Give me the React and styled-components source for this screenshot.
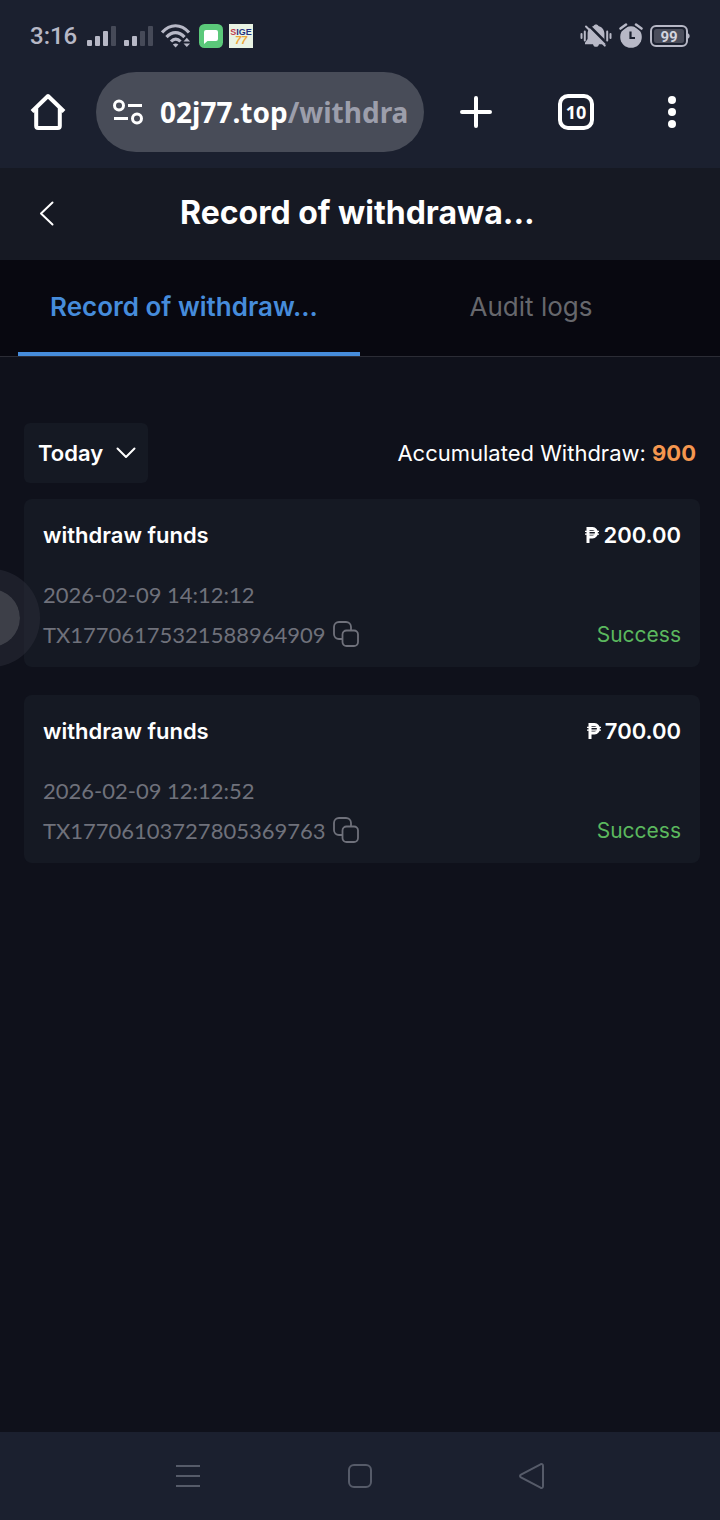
import { useState } from "react";
import styled, { createGlobalStyle } from "styled-components";

const GlobalStyle = createGlobalStyle`
  :root {
    --chrome: #1b202f;
    --header: #161923;
    --tabs: #080810;
    --page: #0f111b;
    --card: #151923;
    --muted: #6f717b;
    --accent: #468cdb;
    --status: #b7b8c6;
  }

  * {
    box-sizing: border-box;
  }

  body {
    margin: 0;
    background: var(--page);
    color: white;
    font-family: Inter, "Liberation Sans", sans-serif;
  }

  button,
  select {
    font: inherit;
    color: inherit;
    border: none;
    background: none;
    padding: 0;
    cursor: pointer;
  }

  svg {
    display: block;
    flex: none;
  }
`;

const Screen = styled.div`
  display: flex;
  flex-direction: column;
  min-height: 100vh;
`;

const StatusBar = styled.div`
  display: flex;
  justify-content: space-between;
  align-items: center;
  height: 72px;
  padding: 0 30px;
  background: var(--chrome);
  color: var(--status);
`;

const StatusGroup = styled.div`
  display: flex;
  align-items: center;
  gap: ${({ $gap }) => $gap}px;
`;

const Clock = styled.time`
  width: 49px;
  font: 500 24px/28px Roboto, sans-serif;
`;

const BrowserBar = styled.div`
  display: flex;
  align-items: center;
  height: 96px;
  padding-bottom: 16px;
  background: var(--chrome);
`;

const BrowserButton = styled.button`
  display: flex;
  justify-content: center;
  align-items: center;
  flex: 0 0 ${({ $width }) => $width}px;
  height: 80px;
`;

const AddressBar = styled.button`
  display: flex;
  align-items: center;
  gap: 16px;
  flex: 1;
  min-width: 0;
  height: 80px;
  padding: 0 8px 0 16px;
  border-radius: 40px;
  background: #484c58;
  font: 700 28px/40px "Noto Sans", sans-serif;
`;

const Url = styled.span`
  white-space: nowrap;

  span {
    color: #9c9eab;
  }
`;

const Header = styled.header`
  display: grid;
  grid-template-columns: 1fr 2fr 1fr;
  align-items: center;
  height: 92px;
  padding-bottom: 2px;
  background: var(--header);

  h1 {
    margin: 0;
    font-size: 32px;
    line-height: 40px;
    font-weight: 700;
    white-space: nowrap;
  }
`;

const BackButton = styled.button`
  justify-self: start;
  padding: 8px 32px;
`;

const Tabs = styled.div`
  display: flex;
  height: 97px;
  padding: 0 18px;
  background: var(--tabs);
  border-bottom: 1px solid #2b2c35;
`;

const Tab = styled.button`
  flex: 1;
  min-width: 0;
  padding: 2px 32px 0;
  font-size: 26px;
  line-height: 32px;
  text-align: ${({ $active }) => ($active ? "left" : "center")};
  white-space: nowrap;
  font-weight: ${({ $active }) => ($active ? 600 : 400)};
  color: ${({ $active }) => ($active ? "var(--accent)" : "#66676c")};
  border-bottom: 4px solid
    ${({ $active }) => ($active ? "var(--accent)" : "transparent")};
`;

const Content = styled.main`
  position: relative;
  flex: 1;
  overflow: hidden;
  padding: 66px 20px 0 24px;
`;

const FilterRow = styled.div`
  display: flex;
  justify-content: space-between;
  align-items: center;
  padding-right: 4px;
  margin-bottom: 16px;
`;

const DateFilter = styled.label`
  display: flex;
  align-items: center;
  width: 124px;
  height: 60px;
  padding: 0 12px 0 14px;
  border-radius: 6px;
  background: var(--card);

  select {
    flex: 1;
    min-width: 0;
    appearance: none;
    outline: none;
    font-size: 22px;
    line-height: 32px;
    font-weight: 600;
  }

  option {
    color: black;
  }
`;

const Total = styled.p`
  margin: 0;
  font-size: 22px;
  line-height: 32px;

  strong {
    font-weight: 700;
    color: #f5974f;
  }
`;

const RecordList = styled.ul`
  display: flex;
  flex-direction: column;
  gap: 28px;
  margin: 0;
  padding: 0;
  list-style: none;
`;

const Record = styled.li`
  height: 168px;
  padding: 20px 19px 0;
  border-radius: 8px;
  background: var(--card);
`;

const RecordRow = styled.div`
  display: flex;
  justify-content: space-between;
  align-items: center;
  height: 40px;
  font-size: 22px;
`;

const RecordTitle = styled(RecordRow)`
  height: 32px;
  margin-bottom: 23px;
  font-weight: 600;
`;

const Amount = styled.span`
  display: flex;
  align-items: center;
  gap: 4px;
`;

const Meta = styled.span`
  display: flex;
  align-items: center;
  gap: 8px;
  font-family: Lato, sans-serif;
  color: var(--muted);
`;

const Result = styled.span`
  font-size: 21px;
  color: #5bb85e;
`;

const FloatingButton = styled.button`
  position: absolute;
  left: -58px;
  top: 212px;
  width: 98px;
  height: 98px;
  border: 20px solid rgba(44, 46, 58, 0.5);
  border-radius: 50%;
  background: #3d3f48;
  background-clip: padding-box;
`;

const SystemNav = styled.nav`
  display: flex;
  justify-content: center;
  gap: 84px;
  height: 88px;
  background: var(--chrome);

  button {
    display: flex;
    justify-content: center;
    align-items: center;
    width: 88px;
    color: #565b69;
  }
`;

const records = [
  {
    id: "TX17706175321588964909",
    title: "withdraw funds",
    amount: "200.00",
    date: "2026-02-09 14:12:12",
    status: "Success",
  },
  {
    id: "TX17706103727805369763",
    title: "withdraw funds",
    amount: "700.00",
    date: "2026-02-09 12:12:52",
    status: "Success",
  },
];

function SignalIcon({ level }) {
  const bars = [6, 10, 15, 20];
  return (
    <svg width="29" height="22" viewBox="0 0 29 22" fill="currentColor">
      {bars.map((height, index) => (
        <rect
          key={height}
          x={index * 8}
          y={21 - height}
          width="5"
          height={height}
          rx="1"
          opacity={index < level ? 1 : 0.28}
        />
      ))}
    </svg>
  );
}

function WifiIcon() {
  return (
    <svg width="30" height="24" viewBox="0 0 30 24" fill="none">
      <g stroke="currentColor" strokeWidth="3.2">
        <path d="M1 8.5C9-.5 20-.5 28 8.5" />
        <path d="M5.5 13.2c5.5-6 12.500-6 18 0" />
        <path d="M10 17.500c3-3.200 6.500-3.200 9.500 0" />
      </g>
      <path
        d="M11.800 20.400c2-1.300 3.800-1.300 5.600 0l-2.800 3.200zM22.500 17.500l3.300-3.700 3.300 3.700zM22.500 19.400h6.600L25.800 23z"
        fill="currentColor"
      />
    </svg>
  );
}

function MessageIcon() {
  return (
    <svg width="24" height="24" viewBox="0 0 24 24">
      <rect width="24" height="24" rx="5.500" fill="#5bc97a" />
      <path
        d="M7 6h10a2 2 0 0 1 2 2v7a2 2 0 0 1-2 2H8.500L5 20V8a2 2 0 0 1 2-2z"
        fill="white"
      />
    </svg>
  );
}

function SiteIcon() {
  return (
    <svg width="24" height="24" viewBox="0 0 24 24">
      <rect width="24" height="24" fill="#e9f3e4" />
      <g
        fontFamily="Liberation Sans, sans-serif"
        fontWeight="700"
        fontSize="9"
        textAnchor="middle"
      >
        <text x="12" y="11" fill="#c03b50">
          S<tspan fill="#26307f">IGE</tspan>
        </text>
        <text x="12" y="20" fontSize="11" fontStyle="italic" fill="#eda63a">
          77
        </text>
      </g>
    </svg>
  );
}

function MutedBellIcon() {
  return (
    <svg width="32" height="26" viewBox="0 0 32 26" fill="none">
      <path
        d="M16 1.500c1.300 0 2 .6 2.400 1.400 3.600.9 6 3.800 6 7.600v5.500l2.600 3.800v1.400h-8c-.3 1.700-1.400 2.600-3 2.600s-2.700-.9-3-2.600H5v-1.400L7.600 16v-5.500c0-3.800 2.400-6.700 6-7.600.4-.8 1.100-1.400 2.400-1.400z"
        fill="currentColor"
      />
      <path d="M7.500 1l20 20" stroke="#1b202f" strokeWidth="2.500" />
      <path
        d="M6 3.500L24.800 22.600M1.500 11v4M4.800 8.500v9M27.200 8.500v9M30.500 11v4"
        stroke="currentColor"
        strokeWidth="2"
        strokeLinecap="round"
      />
    </svg>
  );
}

function AlarmIcon() {
  return (
    <svg width="24" height="26" viewBox="0 0 24 26" fill="none">
      <circle cx="12" cy="14" r="10.800" fill="currentColor" />
      <path
        d="M1.500 6L7.500 1.600M22.500 6l-6-4.400"
        stroke="#1b202f"
        strokeWidth="5"
      />
      <path
        d="M1.500 5.600L7 1.600M22.500 5.600l-5.500-4"
        stroke="currentColor"
        strokeWidth="2.500"
        strokeLinecap="round"
      />
      <path d="M11.500 8.500V15H16" stroke="#1b202f" strokeWidth="2.200" />
    </svg>
  );
}

function BatteryIcon() {
  return (
    <svg width="40" height="22" viewBox="0 0 40 22" fill="none">
      <rect
        x="1"
        y="1"
        width="36"
        height="20"
        rx="5"
        stroke="currentColor"
        strokeWidth="2"
      />
      <rect x="4" y="4" width="30" height="14" rx="2.500" fill="#4a4d5b" />
      <path d="M38 8.500c2.200.5 2.200 4.500 0 5z" fill="currentColor" />
      <text
        x="19"
        y="16.500"
        textAnchor="middle"
        fontFamily="Roboto, sans-serif"
        fontWeight="700"
        fontSize="15"
        fill="#d3d4de"
      >
        99
      </text>
    </svg>
  );
}

function HomeIcon() {
  return (
    <svg width="36" height="38" viewBox="0 0 36 38" fill="none">
      <path
        d="M2 18.500L18 3l16 15.500M6.200 15.500V33a2 2 0 0 0 2 2h19.600a2 2 0 0 0 2-2V15.500"
        stroke="white"
        strokeWidth="4"
        strokeLinejoin="round"
      />
    </svg>
  );
}

function SiteSettingsIcon() {
  return (
    <svg width="32" height="28" viewBox="0 0 32 28" fill="none">
      <g stroke="white" strokeWidth="3">
        <circle cx="7" cy="7.500" r="4.500" />
        <circle cx="25" cy="20.500" r="4.500" />
        <path d="M16 7.500h14M2 20.500h14" />
      </g>
    </svg>
  );
}

function PlusIcon() {
  return (
    <svg width="32" height="32" viewBox="0 0 32 32">
      <path
        d="M16 2v28M2 16h28"
        stroke="white"
        strokeWidth="4"
        strokeLinecap="round"
      />
    </svg>
  );
}

const TabCount = styled.span`
  display: flex;
  justify-content: center;
  align-items: center;
  width: 36px;
  height: 36px;
  border: 4px solid white;
  border-radius: 10px;
  font: 700 18px/24px "Noto Sans", sans-serif;
`;

function MoreIcon() {
  return (
    <svg width="8" height="32" viewBox="0 0 8 32" fill="white">
      <circle cx="4" cy="4" r="4" />
      <circle cx="4" cy="16" r="4" />
      <circle cx="4" cy="28" r="4" />
    </svg>
  );
}

function BackIcon() {
  return (
    <svg width="28" height="28" viewBox="0 0 28 28" fill="none">
      <path
        d="M20.500 3.500L9 14.500l11.500 11"
        stroke="white"
        strokeWidth="2"
        strokeLinecap="round"
        strokeLinejoin="round"
      />
    </svg>
  );
}

function ChevronIcon() {
  return (
    <svg width="20" height="12" viewBox="0 0 20 12" fill="none">
      <path
        d="M1.500 1.500L10 10l8.500-8.500"
        stroke="white"
        strokeWidth="2"
        strokeLinecap="round"
        strokeLinejoin="round"
      />
    </svg>
  );
}

function PesoIcon() {
  return (
    <svg width="14" height="16" viewBox="0 0 14 16" fill="none">
      <path
        d="M3 16V1.500h4.500c5.200 0 5.200 8.500 0 8.500H3"
        stroke="white"
        strokeWidth="3"
      />
      <path d="M0 4.300h14M0 7.200h14" stroke="white" strokeWidth="1.300" />
    </svg>
  );
}

function CopyIcon() {
  return (
    <svg width="26" height="26" viewBox="0 0 26 26" fill="none">
      <g stroke="currentColor" strokeWidth="1.800">
        <rect x="9.500" y="9.500" width="15.500" height="15.500" rx="4" />
        <path d="M9.500 18H6a5 5 0 0 1-5-5V6a5 5 0 0 1 5-5h7a5 5 0 0 1 5 5v3.500" />
      </g>
    </svg>
  );
}

function WithdrawRecord({ id, title, amount, date, status }) {
  function handleCopy() {
    navigator.clipboard?.writeText(id);
  }

  return (
    <Record>
      <RecordTitle>
        <span>{title}</span>
        <Amount>
          <PesoIcon />
          {amount}
        </Amount>
      </RecordTitle>
      <RecordRow>
        <Meta>{date}</Meta>
      </RecordRow>
      <RecordRow>
        <Meta>
          {id}
          <button type="button" aria-label="Copy order number" onClick={handleCopy}>
            <CopyIcon />
          </button>
        </Meta>
        <Result>{status}</Result>
      </RecordRow>
    </Record>
  );
}

export default function App() {
  const [tab, setTab] = useState("records");
  const [period, setPeriod] = useState("Today");

  return (
    <>
      <GlobalStyle />
      <Screen>
        <StatusBar>
          <StatusGroup $gap={8}>
            <Clock>3:16</Clock>
            <SignalIcon level={3} />
            <SignalIcon level={2} />
            <WifiIcon />
            <StatusGroup $gap={6}>
              <MessageIcon />
              <SiteIcon />
            </StatusGroup>
          </StatusGroup>
          <StatusGroup $gap={7}>
            <MutedBellIcon />
            <AlarmIcon />
            <BatteryIcon />
          </StatusGroup>
        </StatusBar>
        <BrowserBar>
          <BrowserButton type="button" aria-label="Home" $width={96}>
            <HomeIcon />
          </BrowserButton>
          <AddressBar type="button">
            <SiteSettingsIcon />
            <Url>
              02j77.top<span>/withdra</span>
            </Url>
          </AddressBar>
          <BrowserButton type="button" aria-label="New tab" $width={104}>
            <PlusIcon />
          </BrowserButton>
          <BrowserButton type="button" aria-label="Open tabs" $width={96}>
            <TabCount>10</TabCount>
          </BrowserButton>
          <BrowserButton type="button" aria-label="More" $width={96}>
            <MoreIcon />
          </BrowserButton>
        </BrowserBar>
        <Header>
          <BackButton type="button" aria-label="Back">
            <BackIcon />
          </BackButton>
          <h1>Record of withdrawa...</h1>
        </Header>
        <Tabs role="tablist">
          <Tab
            type="button"
            role="tab"
            aria-selected={tab === "records"}
            $active={tab === "records"}
            onClick={() => setTab("records")}
          >
            Record of withdraw...
          </Tab>
          <Tab
            type="button"
            role="tab"
            aria-selected={tab === "audit"}
            $active={tab === "audit"}
            onClick={() => setTab("audit")}
          >
            Audit logs
          </Tab>
        </Tabs>
        <Content>
          <FilterRow>
            <DateFilter>
              <select
                aria-label="Period"
                value={period}
                onChange={(event) => setPeriod(event.target.value)}
              >
                <option>Today</option>
                <option>Yesterday</option>
              </select>
              <ChevronIcon />
            </DateFilter>
            <Total>
              Accumulated Withdraw: <strong>900</strong>
            </Total>
          </FilterRow>
          <RecordList>
            {records.map((record) => (
              <WithdrawRecord key={record.id} {...record} />
            ))}
          </RecordList>
          <FloatingButton type="button" aria-label="Assistant" />
        </Content>
        <SystemNav>
          <button type="button" aria-label="Recent apps">
            <svg width="26" height="26" viewBox="0 0 26 26">
              <path
                d="M1 3h24M1 13h24M1 23h24"
                stroke="currentColor"
                strokeWidth="2"
              />
            </svg>
          </button>
          <button type="button" aria-label="Home screen">
            <svg width="26" height="26" viewBox="0 0 26 26" fill="none">
              <rect
                x="2"
                y="2"
                width="22"
                height="22"
                rx="5"
                stroke="currentColor"
                strokeWidth="2"
              />
            </svg>
          </button>
          <button type="button" aria-label="Back to previous app">
            <svg width="28" height="28" viewBox="0 0 28 28" fill="none">
              <path
                d="M3 12.600L22.500 2.300q2.500-1 2.500 1.700v20q0 2.700-2.500 1.700L3 15.400q-2-1.400 0-2.800z"
                stroke="currentColor"
                strokeWidth="2"
              />
            </svg>
          </button>
        </SystemNav>
      </Screen>
    </>
  );
}
